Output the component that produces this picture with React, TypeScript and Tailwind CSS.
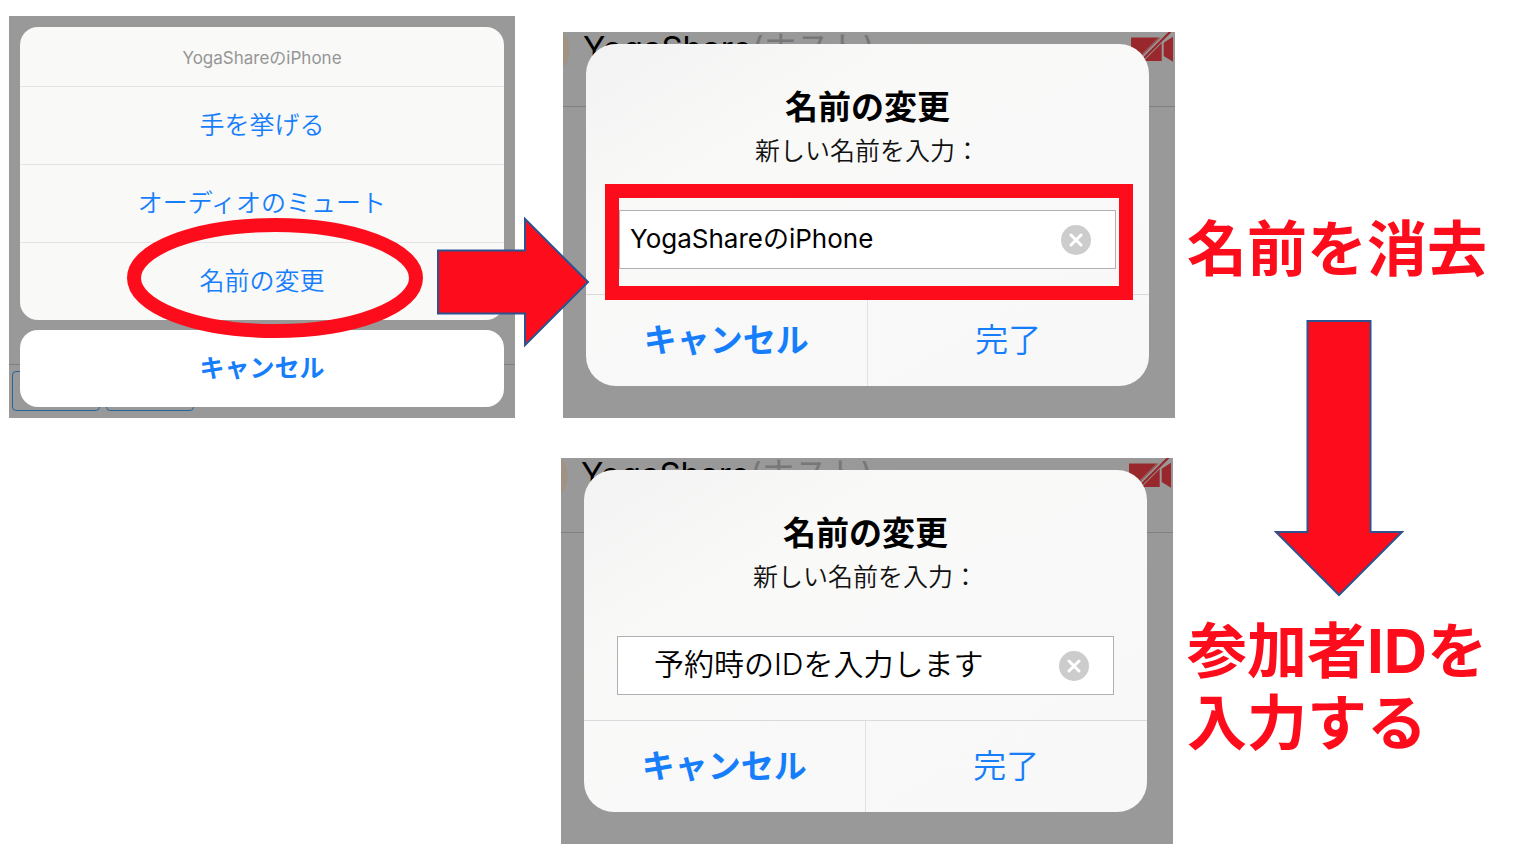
import { useId, useState } from "react";

type RenameDialogProps = {
  initialName: string;
  indented?: boolean;
  highlighted?: boolean;
};

function CameraOffIcon() {
  return (
    <svg viewBox="0 0 42 30" className="h-[30px] w-[42px]" aria-hidden="true">
      <path d="M0 5.500H30.700V29H0Z" fill="#98282b" />
      <path d="M32.700 10.700L42 4.700V29.700L32.700 24Z" fill="#98282b" />
      <path d="M5 32.500L40 -2.500" stroke="#999999" strokeWidth="6" />
      <path d="M6 33L41.500 -2.500" stroke="#98282b" strokeWidth="2.200" />
      <path d="M5 29.500L29 5.500" stroke="#98282b" strokeWidth="1" />
    </svg>
  );
}

function RenameDialog({ initialName, indented, highlighted }: RenameDialogProps) {
  const id = useId();
  const [name, setName] = useState(initialName);

  return (
    <section className="relative overflow-hidden bg-[#999999] pt-3 pr-[26px] pb-8 pl-[23px]">
      <div className="absolute inset-x-0 top-0 h-[75px] border-b border-[#808080]">
        <span className="absolute -top-2 -left-[45px] size-[52px] rounded-full bg-[#a09383]" />
        <p className="absolute -top-1 left-5 text-[33px] leading-10 font-normal whitespace-nowrap text-black">
          YogaShare<span className="text-[#777777]">(ホスト)</span>
        </p>
        <span className="absolute top-0 right-[2px]">
          <CameraOffIcon />
        </span>
      </div>

      <form
        className="relative rounded-[30px] bg-[#f9f9f8] bg-linear-to-br from-[#f3f3f3] via-[#f9f9f8] via-30% to-[#f8f8f9]"
        onSubmit={(event) => event.preventDefault()}
      >
        <div className="px-[33px] pt-10 pb-[25px]">
          <h2 className="text-center text-[33px] leading-[46px] font-bold text-black">名前の変更</h2>
          <label htmlFor={id} className="block text-center text-[25px] leading-[42px] text-[#111111]">
            新しい名前を入力：
          </label>
          <div className="relative mt-[38px] flex h-[59px] items-center border border-[#b0b0b4] bg-white pr-6">
            <input
              id={id}
              value={name}
              onChange={(event) => setName(event.target.value)}
              className={
                indented
                  ? "h-full min-w-0 flex-1 bg-transparent pb-2 pl-9 text-[30px] text-black outline-none"
                  : "h-full min-w-0 flex-1 bg-transparent pb-[6px] pl-[10px] text-[26px] font-normal text-black outline-none"
              }
            />
            <button
              type="button"
              aria-label="クリア"
              onClick={() => setName("")}
              className="flex size-[30px] shrink-0 items-center justify-center rounded-full bg-[#cccccc]"
            >
              <svg viewBox="0 0 14 14" className="size-[14px]" aria-hidden="true">
                <path d="M2 2L12 12M12 2L2 12" stroke="white" strokeWidth="3" strokeLinecap="round" />
              </svg>
            </button>
            {highlighted && (
              <span className="pointer-events-none absolute -top-[27px] -right-[18px] -bottom-8 -left-[15px] border-[14px] border-[#fd0d1b]" />
            )}
          </div>
        </div>
        <div className="grid grid-cols-2 border-t border-[#dadade] text-[33px] leading-[91px] text-[#167efb]">
          <button type="button" className="border-r border-[#e2e2e4] font-bold">
            キャンセル
          </button>
          <button type="submit">完了</button>
        </div>
      </form>
    </section>
  );
}

function ActionSheet() {
  return (
    <section className="relative bg-[#999999] p-[11px]">
      <div className="absolute inset-x-0 bottom-0 h-[54px] border-t border-[#7f7f7f]">
        <div className="flex gap-[6px] pt-[6px] pl-[3px]">
          <span className="h-10 w-[88px] rounded-[4px] border border-[#23659b]" />
          <span className="h-10 w-[88px] rounded-[4px] border border-[#23659b]" />
        </div>
      </div>
      <div className="relative flex flex-col gap-[10px] text-[25px] text-[#167efb]">
        <div className="flex flex-col overflow-hidden rounded-[18px] bg-[#f9f9f8]">
          <h2 className="pt-1 text-center text-[17px] leading-[55px] font-normal text-[#959595]">YogaShareのiPhone</h2>
          <button type="button" className="h-[78px] border-t border-[#e4e4e6]">手を挙げる</button>
          <button type="button" className="h-[78px] border-t border-[#e4e4e6]">オーディオのミュート</button>
          <button type="button" className="h-[78px] border-t border-[#e4e4e6]">名前の変更</button>
        </div>
        <button type="button" className="h-[77px] rounded-[18px] bg-white font-bold">キャンセル</button>
      </div>
      <svg
        viewBox="0 0 296 120"
        className="pointer-events-none absolute top-[202px] left-[118px] h-[120px] w-[296px]"
        aria-hidden="true"
      >
        <ellipse cx="148" cy="60" rx="141" ry="53" fill="none" stroke="#fd0d1b" strokeWidth="14" />
      </svg>
      <svg
        viewBox="0 0 154 132"
        className="pointer-events-none absolute top-[200px] -right-[76px] z-10 h-[132px] w-[154px]"
        aria-hidden="true"
      >
        <path
          d="M1 34.500H88V3L151 66L88 129V97.500H1Z"
          fill="#fd0d1b"
          stroke="#2f528f"
          strokeWidth="2"
        />
      </svg>
    </section>
  );
}

export default function App() {
  return (
    <main className="flex min-h-screen items-start bg-white pl-[9px] font-['Inter','Noto_Sans_CJK_JP',sans-serif] font-[350]">
      <div className="relative z-10 mt-4 min-w-0 flex-[506]">
        <ActionSheet />
      </div>
      <div className="mt-8 ml-12 flex min-w-0 flex-[612] flex-col gap-10">
        <RenameDialog initialName="YogaShareのiPhone" highlighted />
        <div className="mr-[2px] -ml-[2px]">
          <RenameDialog initialName="予約時のIDを入力します" indented />
        </div>
      </div>
      <div className="mt-[213px] ml-3 min-w-0 flex-[333] text-[60px] leading-[72px] font-bold whitespace-nowrap text-[#fd0d1b]">
        <p>名前を消去</p>
        <svg viewBox="0 0 132 280" className="mt-[34px] ml-[86px] h-[280px] w-[132px]" aria-hidden="true">
          <path
            d="M34.500 2H97.500V213H129L66 276L3 213H34.500Z"
            fill="#fd0d1b"
            stroke="#2f528f"
            strokeWidth="2"
          />
        </svg>
        <p className="mt-4">
          参加者IDを
          <br />
          入力する
        </p>
      </div>
    </main>
  );
}
